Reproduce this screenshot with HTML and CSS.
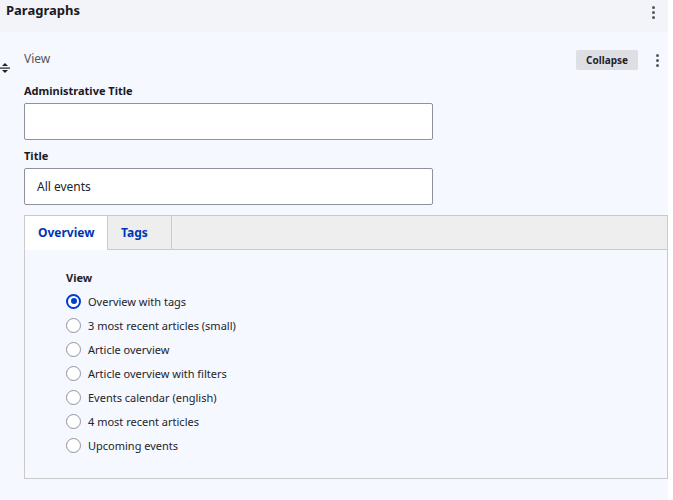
FILE: index.html
```html
<!DOCTYPE html>
<html>
<head>
    <title>Paragraphs</title>
    <link rel="stylesheet" href="styles.css">
</head>
<body>
    <div class="widget">
        <div class="widget-header">
            <div class="widget-title">Paragraphs</div>
            <div class="kebab"><span></span><span></span><span></span></div>
        </div>
        <div class="paragraph">
            <div class="paragraph-top">
                <div class="drag-handle">
                    <svg width="10" height="12" viewBox="0 0 10 12">
                        <path d="M5 1 L8 4 L2 4 Z" fill="#222"/>
                        <rect x="0" y="5.5" width="10" height="1.2" fill="#222"/>
                        <path d="M5 11 L8 8 L2 8 Z" fill="#222"/>
                    </svg>
                </div>
                <div class="paragraph-type">View</div>
                <div class="button-collapse">Collapse</div>
                <div class="kebab"><span></span><span></span><span></span></div>
            </div>
            <div class="paragraph-body">
                <div class="form-item">
                    <label class="form-label">Administrative Title</label>
                    <div class="form-input"></div>
                </div>
                <div class="form-item">
                    <label class="form-label">Title</label>
                    <div class="form-input">All events</div>
                </div>
                <div class="tabs">
                    <div class="tab-bar">
                        <div class="tab active">Overview</div>
                        <div class="tab tab-tags">Tags</div>
                    </div>
                    <div class="tab-pane">
                        <div class="radio-label">View</div>
                        <div class="radio-list">
                            <div class="radio-row"><span class="radio checked"></span>Overview with tags</div>
                            <div class="radio-row"><span class="radio"></span>3 most recent articles (small)</div>
                            <div class="radio-row"><span class="radio"></span>Article overview</div>
                            <div class="radio-row"><span class="radio"></span>Article overview with filters</div>
                            <div class="radio-row"><span class="radio"></span>Events calendar (english)</div>
                            <div class="radio-row"><span class="radio"></span>4 most recent articles</div>
                            <div class="radio-row"><span class="radio"></span>Upcoming events</div>
                        </div>
                    </div>
                </div>
            </div>
        </div>
    </div>
</body>
</html>
```

FILE: styles.css
```css
body {
    margin: 0;
    background-color: #fff;
    font-family: "Noto Sans", sans-serif;
    color: #232429;
}
.widget {
    width: 668px;
    height: 500px;
    background-color: #f5f8ff;
}
.widget-header {
    height: 32px;
    background-color: #f3f4f9;
    display: flex;
    justify-content: space-between;
    padding: 0 13px 0 6px;
}
.widget-title {
    font-size: 13px;
    font-weight: bold;
    line-height: 13px;
    padding-top: 4px;
    color: #191a1f;
}
.kebab {
    display: flex;
    flex-direction: column;
    gap: 2px;
    padding-top: 6px;
}
.kebab span {
    width: 3px;
    height: 3px;
    border-radius: 50%;
    background-color: #55565b;
}
.paragraph-top {
    display: flex;
    align-items: flex-start;
    height: 51px;
    padding-top: 19px;
    box-sizing: border-box;
    padding-right: 9px;
}
.drag-handle {
    width: 24px;
    padding-top: 6px;
}
.paragraph-type {
    flex: 1;
    font-size: 12px;
    color: #55565b;
    line-height: 16px;
}
.button-collapse {
    margin-top: -1px;
    font-size: 10px;
    font-weight: bold;
    background-color: #dedfe4;
    border-radius: 2px;
    padding: 2px 10px 2px 10px;
    line-height: 16px;
    color: #232429;
    margin-right: 18px;
}
.paragraph-top .kebab {
    padding-top: 3px;
}
.paragraph-body {
    padding-left: 24px;
}
.form-item {
    margin-bottom: 8px;
}
.form-label {
    display: block;
    font-size: 11px;
    font-weight: bold;
    line-height: 16px;
    margin-bottom: 4px;
    color: #191a1f;
}
.form-input {
    width: 409px;
    height: 37px;
    box-sizing: border-box;
    background-color: #fff;
    border: 1px solid #8e929c;
    border-radius: 2px;
    font-size: 12px;
    line-height: 35px;
    padding-left: 12px;
    color: #232429;
}
.tabs {
    width: 644px;
    height: 264px;
    box-sizing: border-box;
    border: 1px solid #cacaca;
    margin-top: 10px;
}
.tab-bar {
    display: flex;
    height: 33px;
    background-color: #eeeeee;
    border-bottom: 1px solid #cacaca;
}
.tab {
    font-size: 12px;
    font-weight: bold;
    color: #0036b1;
    padding: 0 13px;
    line-height: 34px;
    border-right: 1px solid #cacaca;
}
.tab.active {
    background-color: #fff;
    height: 34px;
    width: 56px;
}
.tab-tags {
    width: 37px;
}
.tab-pane {
    padding: 21px 0 0 41px;
}
.radio-label {
    font-size: 11px;
    font-weight: bold;
    line-height: 14px;
    margin-bottom: 4px;
}
.radio-list {
    display: flex;
    flex-direction: column;
}
.radio-row {
    display: flex;
    align-items: center;
    height: 24px;
    font-size: 11px;
    color: #232429;
}
.radio {
    width: 15px;
    height: 15px;
    box-sizing: border-box;
    border: 1px solid #8e929c;
    border-radius: 50%;
    background-color: #fff;
    margin-right: 7px;
    position: relative;
}
.radio.checked {
    border: 2px solid #003ecc;
}
.radio.checked::after {
    content: "";
    position: absolute;
    left: 2.5px;
    top: 2.5px;
    width: 6px;
    height: 6px;
    border-radius: 50%;
    background-color: #003ecc;
}
```
